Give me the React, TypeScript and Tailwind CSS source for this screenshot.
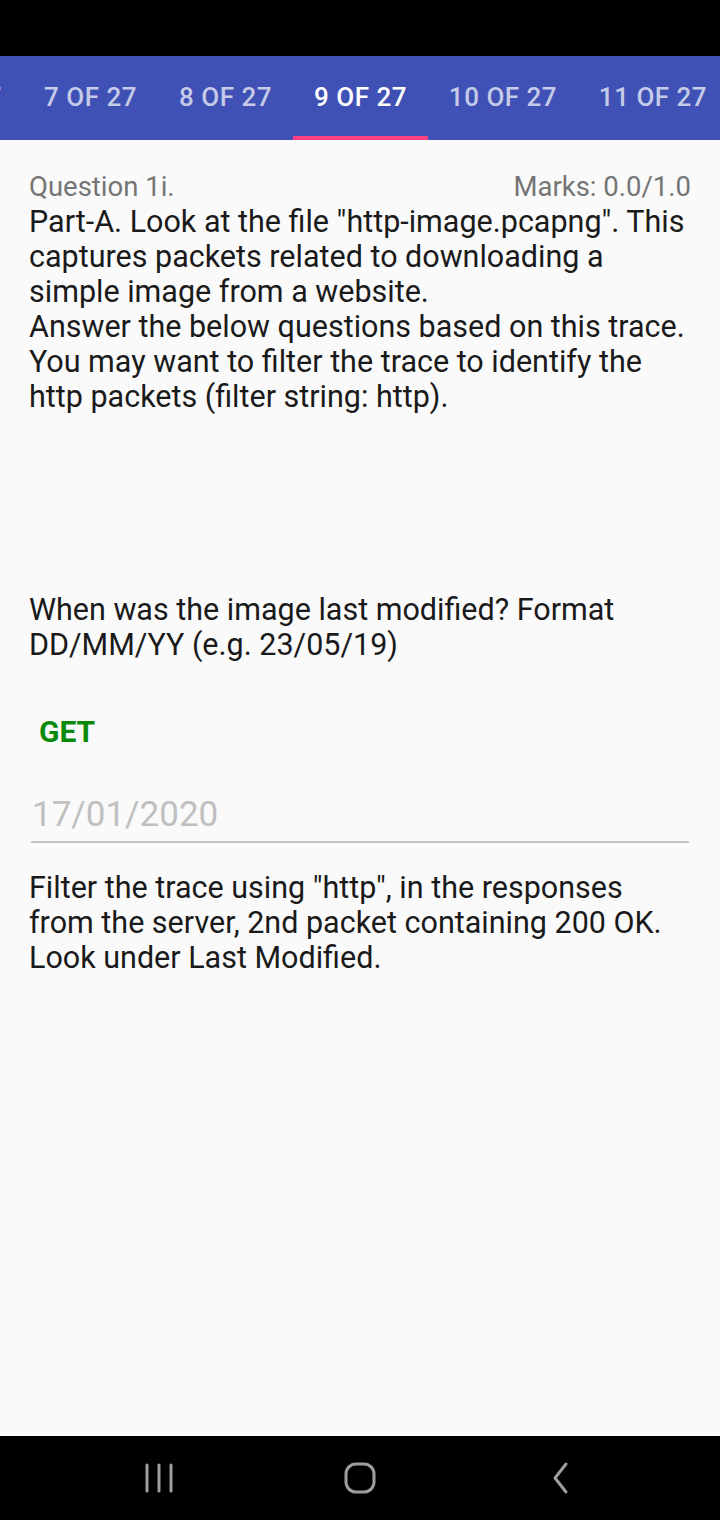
const tabs = [
  { label: '6 OF 27', wide: false },
  { label: '7 OF 27', wide: false },
  { label: '8 OF 27', wide: false },
  { label: '9 OF 27', wide: false, active: true },
  { label: '10 OF 27', wide: true },
  { label: '11 OF 27', wide: true },
]

function NavBar() {
  return (
    <div className="h-[84px] bg-black flex items-center justify-center shrink-0">
      <div className="w-[201px] flex justify-center">
        <svg width="30" height="32" viewBox="0 0 30 32" className="text-[#9e9e9e]">
          <g stroke="currentColor" strokeWidth="3" strokeLinecap="round">
            <line x1="3" y1="3" x2="3" y2="29" />
            <line x1="15" y1="3" x2="15" y2="29" />
            <line x1="27" y1="3" x2="27" y2="29" />
          </g>
        </svg>
      </div>
      <div className="w-[201px] flex justify-center">
        <svg width="34" height="34" viewBox="0 0 34 34" className="text-[#9e9e9e]">
          <rect x="3" y="3" width="28" height="28" rx="10" fill="none" stroke="currentColor" strokeWidth="3" />
        </svg>
      </div>
      <div className="w-[201px] flex justify-center">
        <svg width="22" height="34" viewBox="0 0 22 34" className="text-[#9e9e9e]">
          <polyline points="16,3 5,17 16,31" fill="none" stroke="currentColor" strokeWidth="3" strokeLinecap="round" strokeLinejoin="round" />
        </svg>
      </div>
    </div>
  )
}

export default function App() {
  return (
    <div className="w-[720px] h-[1520px] flex flex-col bg-[#fafafa] overflow-hidden" style={{ fontFamily: 'Roboto, "Noto Sans", sans-serif' }}>
      <div className="h-[56px] bg-black shrink-0" />

      <div className="h-[84px] bg-[#3f51b5] shrink-0 overflow-hidden">
        <div className="flex h-full ml-[-112px]">
          {tabs.map((t) => (
            <div
              key={t.label}
              className={`shrink-0 h-full flex flex-col ${t.wide ? 'w-[150px]' : 'w-[135px]'}`}
            >
              <div
                className={`flex-1 flex items-center justify-center pt-[3px] text-[26px] font-medium tracking-[0.5px] ${
                  t.active ? 'text-white' : 'text-[#c5cae9]'
                }`}
              >
                {t.label}
              </div>
              <div className={`h-[4px] ${t.active ? 'bg-[#ff4081]' : ''}`} />
            </div>
          ))}
        </div>
      </div>

      <div className="flex-1 px-[29px] pt-[30px]">
        <div className="flex justify-between text-[27.5px] leading-[34px] text-[#757575]">
          <span>Question 1i.</span>
          <span>Marks: 0.0/1.0</span>
        </div>
        <p className="text-[30.5px] leading-[35px] text-[#1a1a1a]">
          Part-A. Look at the file "http-image.pcapng". This captures packets related to downloading a simple image from a website.
          <br />
          Answer the below questions based on this trace. You may want to filter the trace to identify the http packets (filter string: http).
        </p>

        <p className="mt-[178px] text-[30.5px] leading-[35px] text-[#1a1a1a] pr-[40px]">
          When was the image last modified? Format DD/MM/YY (e.g. 23/05/19)
        </p>

        <div className="mt-[52px] pl-[10px] text-[30px] font-bold text-[#0a8a0a] leading-[36px]">GET</div>

        <div className="mt-[45px] mx-[2px] border-b-2 border-[#c4c4c4] pb-[6px] pl-[1px]">
          <span className="block text-[35px] leading-[40px] text-[#c0c0c0]">17/01/2020</span>
        </div>

        <p className="mt-[27px] text-[30.5px] leading-[35px] text-[#1a1a1a]">
          Filter the trace using "http", in the responses from the server, 2nd packet containing 200 OK. Look under Last Modified.
        </p>
      </div>

      <NavBar />
    </div>
  )
}
